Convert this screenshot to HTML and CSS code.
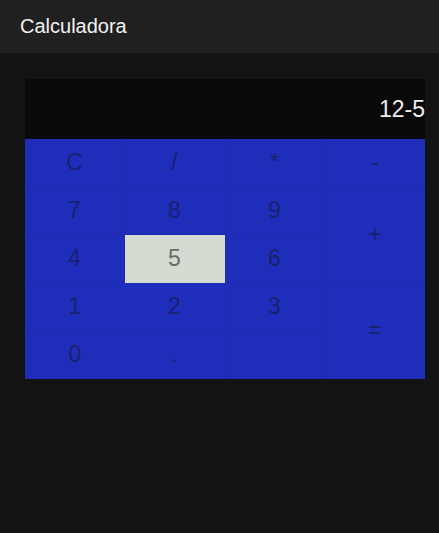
FILE: index.html
```html
<!DOCTYPE html>
<html lang="es">
<head>
<meta charset="utf-8">
<title>Calculadora</title>
<link rel="stylesheet" href="styles.css">
</head>
<body>
<header class="topbar"><h1 class="title">Calculadora</h1></header>
<main class="main">
  <div class="calc">
    <div class="display">12-5</div>
    <div class="keys">
      <button class="key">C</button>
      <button class="key">/</button>
      <button class="key">*</button>
      <button class="key">-</button>
      <button class="key">7</button>
      <button class="key">8</button>
      <button class="key">9</button>
      <button class="key tall">+</button>
      <button class="key">4</button>
      <button class="key active">5</button>
      <button class="key">6</button>
      <button class="key">1</button>
      <button class="key">2</button>
      <button class="key">3</button>
      <button class="key tall">=</button>
      <button class="key">0</button>
      <button class="key">.</button>
      <button class="key"></button>
    </div>
  </div>
</main>
</body>
</html>
```
FILE: styles.css
```css
html, body {
  margin: 0;
  padding: 0;
  background: #131313;
  font-family: "Liberation Sans", Arial, sans-serif;
}
.topbar {
  height: 53px;
  background: #202020;
  display: flex;
  align-items: center;
  padding: 0 20px;
}
.title {
  margin: 0;
  font-size: 20px;
  font-weight: normal;
  color: #f2f2f2;
}
.main {
  padding: 26px 25px;
}
.calc {
  width: 400px;
}
.display {
  height: 60px;
  background: #0a0909;
  color: #eeeeee;
  font-size: 23px;
  display: flex;
  align-items: center;
  justify-content: flex-end;
}
.keys {
  display: grid;
  grid-template-columns: repeat(4, 100px);
  grid-auto-rows: 48px;
  background: #1f2dbb;
}
.key {
  box-sizing: border-box;
  margin: 0;
  padding: 0;
  border: none;
  border-right: 1px solid #1e2aaa;
  border-bottom: 1px solid #1e2aaa;
  background: #1f2dbb;
  color: #19216c;
  font-family: "Liberation Sans", Arial, sans-serif;
  font-size: 23px;
  display: flex;
  align-items: center;
  justify-content: center;
}
.key:nth-child(4n) {
  border-right: none;
}
.tall {
  grid-column: 4;
  grid-row: span 2;
  border-right: none;
}
.active {
  background: #d5dbd0;
  color: #6b6b6b;
  border-color: #d5dbd0;
}
```
